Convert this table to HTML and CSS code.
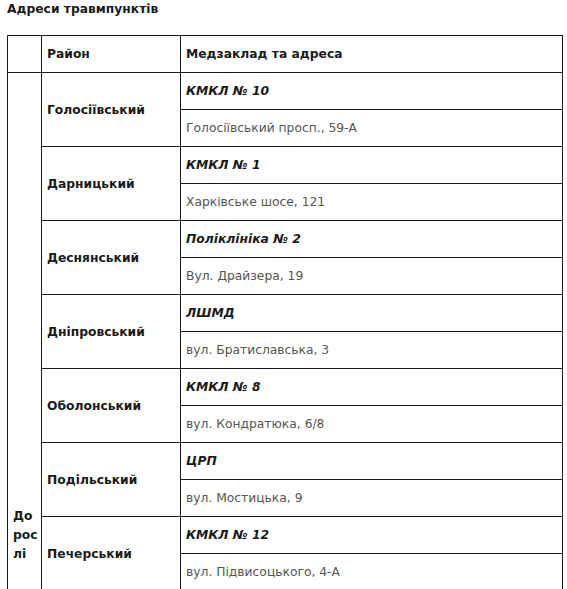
FILE: index.html
```html
<!DOCTYPE html>
<html lang="uk">
<head>
<meta charset="utf-8">
<link rel="stylesheet" href="styles.css">
</head>
<body>
<h3 class="title">Адреси травмпунктів</h3>
<table class="tbl">
<colgroup><col class="c1"><col class="c2"><col class="c3"></colgroup>
<thead>
<tr><th></th><th>Район</th><th>Медзаклад та адреса</th></tr>
</thead>
<tbody>
<tr><td class="grp" rowspan="25">До<wbr>рос<wbr>лі</td><td class="dist" rowspan="2">Голосіївський</td><td class="name">КМКЛ № 10</td></tr>
<tr><td class="addr">Голосіївський просп., 59-А</td></tr>
<tr><td class="dist" rowspan="2">Дарницький</td><td class="name">КМКЛ № 1</td></tr>
<tr><td class="addr">Харківське шосе, 121</td></tr>
<tr><td class="dist" rowspan="2">Деснянський</td><td class="name">Поліклініка № 2</td></tr>
<tr><td class="addr">Вул. Драйзера, 19</td></tr>
<tr><td class="dist" rowspan="2">Дніпровський</td><td class="name">ЛШМД</td></tr>
<tr><td class="addr">вул. Братиславська, 3</td></tr>
<tr><td class="dist" rowspan="2">Оболонський</td><td class="name">КМКЛ № 8</td></tr>
<tr><td class="addr">вул. Кондратюка, 6/8</td></tr>
<tr><td class="dist" rowspan="2">Подільський</td><td class="name">ЦРП</td></tr>
<tr><td class="addr">вул. Мостицька, 9</td></tr>
<tr><td class="dist" rowspan="2">Печерський</td><td class="name">КМКЛ № 12</td></tr>
<tr><td class="addr">вул. Підвисоцького, 4-А</td></tr>
<tr><td class="dist" rowspan="4">Святошинський</td><td class="name">КМКЛ № 9</td></tr>
<tr><td class="addr">вул. Ірпінська, 63</td></tr>
<tr><td class="name">Поліклініка № 1</td></tr>
<tr><td class="addr">просп. Перемоги, 97</td></tr>
<tr><td class="dist" rowspan="3">Солом'янський</td><td class="name">Поліклініка № 3</td></tr>
<tr><td class="addr">вул. Гарматна, 28</td></tr>
<tr><td class="addr">цілодобово</td></tr>
<tr><td class="dist" rowspan="4">Шевченківський</td><td class="name">КМКЛ № 17</td></tr>
<tr><td class="addr">вул. Салютна, 9</td></tr>
<tr><td class="name">Поліклініка № 2</td></tr>
<tr><td class="addr">вул. Бульварно-Кудрявська, 40</td></tr>
</tbody>
</table>
</body>
</html>
```

FILE: styles.css
```css
html, body {
  margin: 0;
  padding: 0;
  background: #fff;
}
body {
  padding: 0 6px 0 7px;
  font-family: "DejaVu Sans", sans-serif;
  font-size: 12.3px;
  color: #1a1a1a;
}
.title {
  margin: 0;
  padding-top: 1px;
  height: 34px;
  font-size: 12.3px;
  font-weight: bold;
  line-height: 16px;
}
.tbl {
  border-collapse: collapse;
  table-layout: fixed;
  width: 555px;
}
.c1 { width: 34px; }
.c2 { width: 139px; }
.c3 { width: 382px; }
.tbl th, .tbl td {
  border: 1px solid #1c1c1c;
  height: 37px;
  padding: 0 5px;
  text-align: left;
  vertical-align: middle;
  box-sizing: border-box;
}
.tbl th {
  font-weight: bold;
  color: #1a1a1a;
}
.grp {
  font-weight: bold;
  line-height: 19px;
}
.dist {
  font-weight: bold;
}
.name {
  font-weight: bold;
  font-style: italic;
}
.addr {
  color: #555;
}
```
